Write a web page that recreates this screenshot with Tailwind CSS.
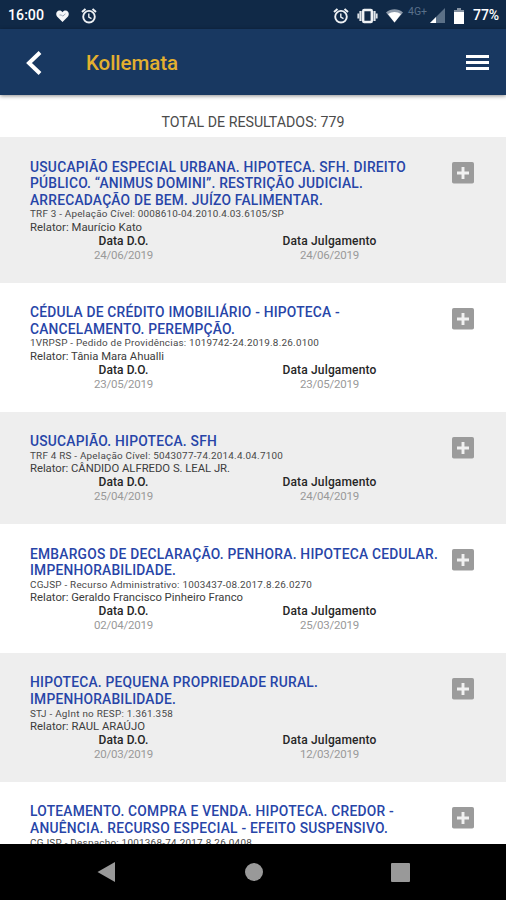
<!DOCTYPE html>
<html lang="pt-BR">
<head>
<meta charset="utf-8">
<meta name="viewport" content="width=device-width">
<title>Kollemata</title>
<script src="https://cdn.jsdelivr.net/npm/@tailwindcss/browser@4"></script>
</head>
<body class="bg-white">
<div class="flex h-[900px] w-[506px] flex-col overflow-hidden bg-white font-['Roboto',sans-serif]">
  <div class="flex h-[29px] shrink-0 items-center bg-[#102947] pt-[2px] pl-[8px] text-white">
    <span class="w-[48px] text-[14.2px] font-medium">16:00</span>
    <svg class="h-[12px] w-[13px]" viewBox="0 0 13 12"><path d="M6.5 12 1 6.4C-.6 4.600.200.500 3.500.500c1.300 0 2.300.7 3 1.700C7.200 1.200 8.200.5 9.500.5c3.300 0 4.100 4.100 2.500 5.900z" fill="#f4f6f8"/><path d="m3.500 5 2 0 1.200 1.200L9.500 3.800" fill="none" stroke="#8493a5" stroke-width=".8"/></svg>
    <svg class="ml-[12px] h-[16px] w-[16px]" viewBox="0 0 16 16" fill="none" stroke="#eef1f4"><circle cx="8" cy="8.700" r="5.800" stroke-width="1.900"/><path d="M1 4 4.500 1M15 4l-3.500-3" stroke-width="2"/><path d="M7.800 5.500v3.700l2.700 1.500" stroke-width="1.400"/></svg>
    <svg class="ml-[236px] h-[16px] w-[16px]" viewBox="0 0 16 16" fill="none" stroke="#eef1f4"><circle cx="8" cy="8.700" r="5.800" stroke-width="1.900"/><path d="M1 4 4.500 1M15 4l-3.500-3" stroke-width="2"/><path d="M7.800 5.500v3.700l2.700 1.500" stroke-width="1.400"/></svg>
    <svg class="ml-[8px] h-[16px] w-[21px]" viewBox="0 0 21 16"><rect x="6.200" y="2" width="8.600" height="12" rx="1" fill="none" stroke="#eef1f4" stroke-width="2.400"/><path d="M3.500 3v10M17.500 3v10" stroke="#dfe4e9" stroke-width="2.200"/><path d="M1.300 5.500v5M19.700 5.500v5" stroke="#dfe4e9" stroke-width="1.800"/></svg>
    <svg class="ml-[8px] h-[14px] w-[17px]" viewBox="0 0 17 14"><path d="M0 3.500C5-.8 12-.8 17 3.500L8.500 13.500z" fill="#8d9aaa"/><path d="M2 5c4-2.700 9-2.700 13 0l-6.500 8.500z" fill="#fff"/></svg>
    <span class="ml-[5px] w-[21px] self-start pt-[4px] text-[10.500px] leading-[12px] text-[#59708a]">4G+</span>
    <svg class="ml-[1px] h-[15px] w-[15px]" viewBox="0 0 15 15"><path d="M0 15 15 0v15z" fill="#5b7087"/><path d="M0 15 6 9v6z" fill="#fff"/></svg>
    <svg class="ml-[9px] h-[16px] w-[10px]" viewBox="0 0 10 16"><path d="M3 0h4v2h3v3H0V2h3z" fill="#8592a2"/><path d="M0 4h10v12H0z" fill="#fff"/></svg>
    <span class="ml-[9px] text-[14px] font-medium"><span data-w="26">77%</span></span>
  </div>
  <header class="relative z-10 flex h-[66px] shrink-0 items-center bg-[#183861] pt-[1px] pr-[17px] pl-[26px] shadow-[0_1px_4px_rgba(0,0,0,0.45)]">
    <svg class="h-[26px] w-[16px]" viewBox="0 0 16 26"><path d="M14 2.500 3 13l11 10.500" fill="none" stroke="#fff" stroke-width="4"/></svg>
    <h1 class="ml-[44px] flex-1 pt-[1px] text-[20.500px] font-medium text-[#e3b02f]"><span data-w="92">Kollemata</span></h1>
    <div class="flex w-[23px] flex-col gap-[3px]"><i class="h-[3px] bg-white"></i><i class="h-[3px] bg-white"></i><i class="h-[3px] bg-white"></i></div>
  </header>
  <div class="flex h-[42px] shrink-0 items-center justify-center pt-[13px] text-[14.200px] text-[#4b4b4b]"><span data-w="183">TOTAL DE RESULTADOS: 779</span></div>
  <main id="list" class="min-h-0 flex-1 overflow-hidden"></main>
  <nav class="flex h-[56px] shrink-0 items-center bg-black pl-[97px]">
    <svg class="h-[20px] w-[18px]" viewBox="0 0 18 20"><path d="M.5 10 18 0v20z" fill="#999"/></svg>
    <i class="ml-[130px] size-[18px] rounded-full bg-[#999]"></i>
    <i class="ml-[128px] size-[19px] rounded-[1px] bg-[#999]"></i>
  </nav>
</div>
<template id="card">
  <article class="flex items-start pt-[21.600px] pl-[30px] odd:bg-[#eeeeee]">
    <div class="w-[422px] shrink-0">
      <h2 class="text-[13.800px] leading-[16.600px] font-medium whitespace-nowrap text-[#2745a8]"></h2>
      <p class="h-[12.500px] text-[9.900px] leading-[12.500px] whitespace-nowrap text-[#484848]"><span></span></p>
      <p class="h-[13px] text-[11.300px] leading-[13px] whitespace-nowrap text-[#3c3c3c]"><span></span></p>
      <div class="flex h-[48.700px] text-center">
        <div class="w-[187px]"><div class="text-[12px] leading-[14px] font-medium text-[#262626]"><span data-w="50">Data D.O.</span></div><div class="text-[11.500px] leading-[14.500px] text-[#999]"><span data-w="59"></span></div></div>
        <div class="ml-[19px] w-[187px]"><div class="text-[12px] leading-[14px] font-medium text-[#262626]"><span data-w="94">Data Julgamento</span></div><div class="text-[11.500px] leading-[14.500px] text-[#999]"><span data-w="59"></span></div></div>
      </div>
    </div>
    <svg class="mt-[3.400px] size-[22px]" viewBox="0 0 22 22"><rect width="22" height="21.500" rx="1.800" fill="#9b9b9b"/><path d="M11 5v12M5 11h12" stroke="#f1f1f1" stroke-width="2.900"/></svg>
  </article>
</template>
<script>
const cards = [
  [[["USUCAPIÃO ESPECIAL URBANA. HIPOTECA. SFH. DIREITO",376],["PÚBLICO. “ANIMUS DOMINI”. RESTRIÇÃO JUDICIAL.",333],["ARRECADAÇÃO DE BEM. JUÍZO FALIMENTAR.",293]],["TRF 3 - Apelação Cível: 0008610-04.2010.4.03.6105/SP",254],["Relator: Maurício Kato",112],"24/06/2019","24/06/2019"],
  [[["CÉDULA DE CRÉDITO IMOBILIÁRIO - HIPOTECA -",310],["CANCELAMENTO. PEREMPÇÃO.",205]],["1VRPSP - Pedido de Providências: 1019742-24.2019.8.26.0100",289],["Relator: Tânia Mara Ahualli",134],"23/05/2019","23/05/2019"],
  [[["USUCAPIÃO. HIPOTECA. SFH",187]],["TRF 4 RS - Apelação Cível: 5043077-74.2014.4.04.7100",253],["Relator: CÂNDIDO ALFREDO S. LEAL JR.",200],"25/04/2019","24/04/2019"],
  [[["EMBARGOS DE DECLARAÇÃO. PENHORA. HIPOTECA CEDULAR.",408],["IMPENHORABILIDADE.",146]],["CGJSP - Recurso Administrativo: 1003437-08.2017.8.26.0270",282],["Relator: Geraldo Francisco Pinheiro Franco",213],"02/04/2019","25/03/2019"],
  [[["HIPOTECA. PEQUENA PROPRIEDADE RURAL.",288],["IMPENHORABILIDADE.",146]],["STJ - AgInt no RESP: 1.361.358",143],["Relator: RAUL ARAÚJO",115],"20/03/2019","12/03/2019"],
  [[["LOTEAMENTO. COMPRA E VENDA. HIPOTECA. CREDOR -",364],["ANUÊNCIA. RECURSO ESPECIAL - EFEITO SUSPENSIVO.",358]],["CGJSP - Despacho: 1001368-74.2017.8.26.0408",222],null,null,null]
];
const list = document.getElementById("list"), tpl = document.getElementById("card");
for (const [title, process, reporter, published, judged] of cards) {
  const card = tpl.content.firstElementChild.cloneNode(true);
  const [p, r, , d1, , d2] = card.querySelectorAll("span");
  const h = card.querySelector("h2");
  title.forEach(([text, width], i) => {
    if (i) h.append(document.createElement("br"));
    const s = document.createElement("span");
    s.textContent = text;
    s.dataset.w = width;
    h.append(s);
  });
  p.textContent = process[0]; p.dataset.w = process[1];
  if (reporter) {
    r.textContent = reporter[0]; r.dataset.w = reporter[1];
    d1.textContent = published; d2.textContent = judged;
  } else {
    r.parentElement.nextElementSibling.remove();
    r.parentElement.remove();
  }
  list.append(card);
}
// Tracks each line so that it spans its data-w width.
function fitAll() {
  for (const el of document.querySelectorAll("[data-w]")) {
    el.style.letterSpacing = "0px";
    const gap = el.dataset.w - el.getBoundingClientRect().width;
    el.style.letterSpacing = gap / el.textContent.length + "px";
  }
}
fitAll();
addEventListener("load", fitAll);
document.fonts.ready.then(fitAll);
setTimeout(fitAll, 60);
</script>
</body>
</html>
